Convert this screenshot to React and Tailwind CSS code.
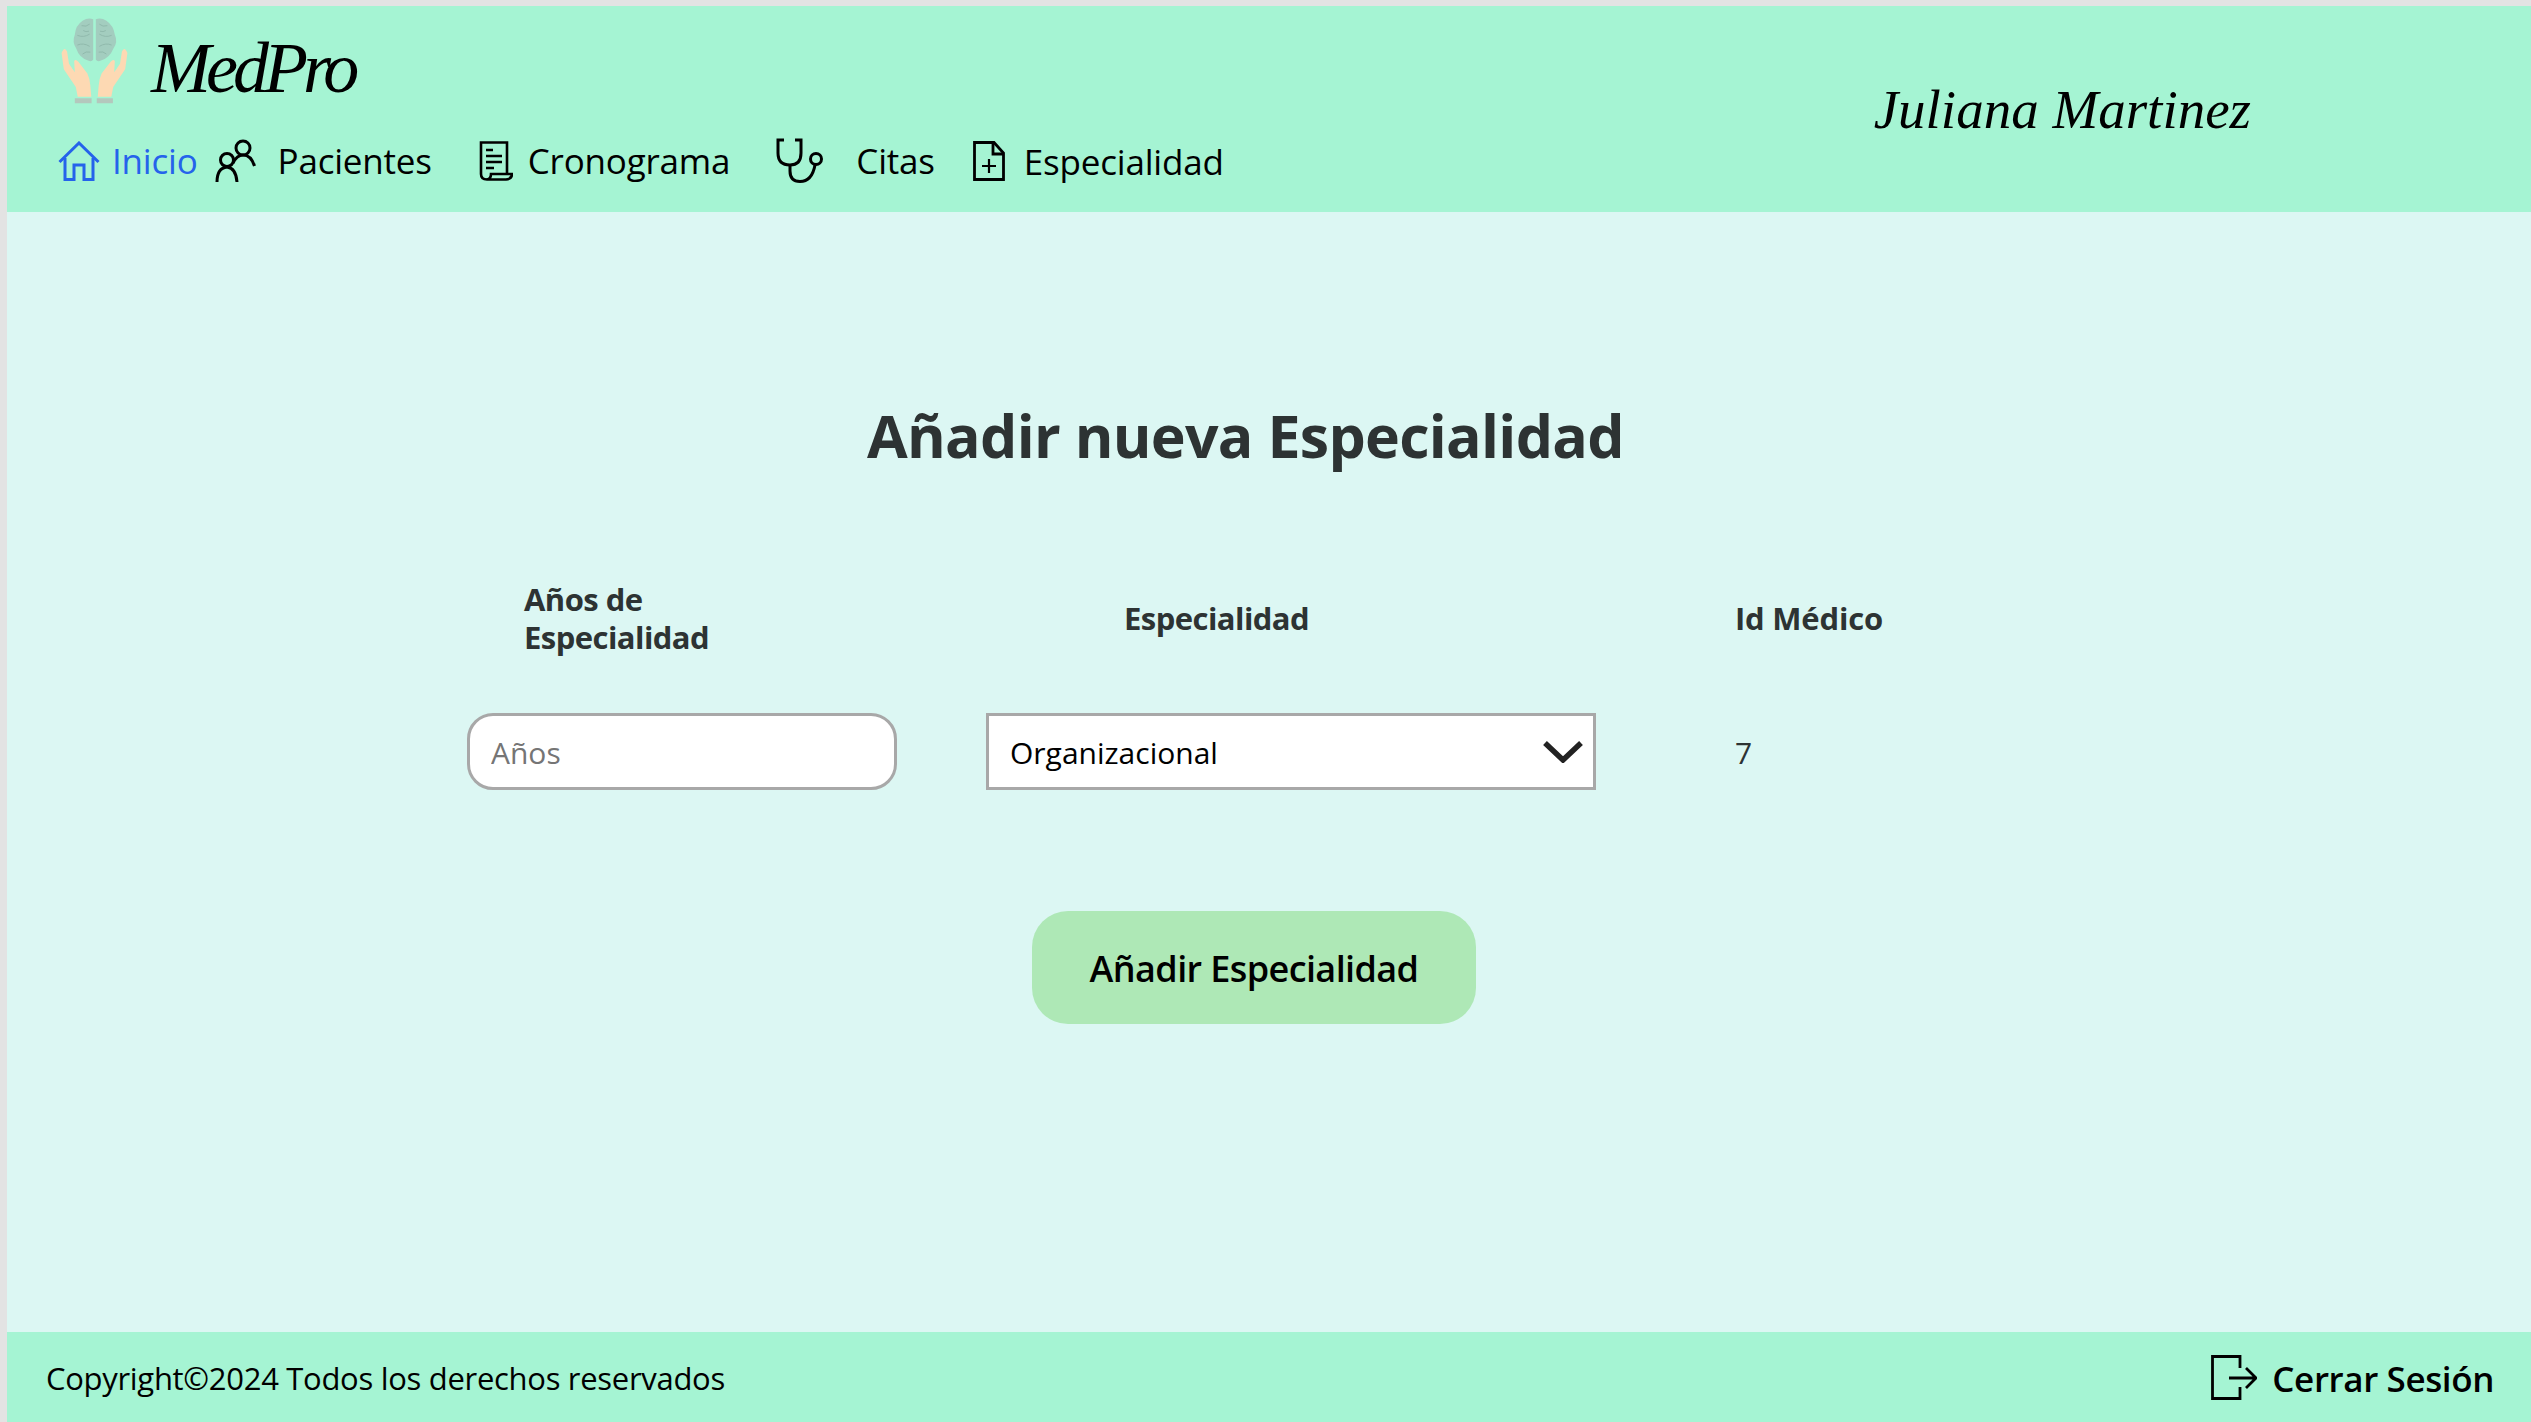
function Logo() {
  return (
    <svg viewBox="60 30 210 285" className="w-[69px] h-[92px] shrink-0">
      <g fill="#fdd9b3">
        <path d="M63 145 Q72 122 80 140 L86 178 L104 204 L102 170 Q106 162 115 172 L143 208 Q150 222 152 245 L155 280 L113 280 L107 250 L70 195 Z" />
        <path d="M267 145 Q258 122 250 140 L244 178 L226 204 L228 170 Q224 162 215 172 L187 208 Q180 222 178 245 L175 280 L217 280 L223 250 L260 195 Z" />
      </g>
      <path d="M104 285h52v15h-52zM172 285h50v15h-50z" fill="#b4c8bd" />
      <path d="M161 40 Q145 33 128 45 Q106 60 104 88 Q95 110 108 130 Q118 160 145 168 Q156 174 161 165 Z M169 40 Q185 33 202 45 Q224 60 228 88 Q238 110 224 130 Q212 160 185 168 Q174 174 169 165 Z" fill="#a3cdbf" />
      <path d="M125 60q15 5 25 -5M112 90q20 8 38 -4M112 120q18 -8 38 4M128 148q10-10 24-6M130 75q8 6 18 2M205 60q-15 5-25 -5M218 90q-20 8-38 -4M218 120q-18 -8-38 4M202 148q-10-10-24-6M200 75q-8 6-18 2" fill="none" stroke="#8fb9ab" strokeWidth="3" />
    </svg>
  );
}

const HomeIcon = () => (
  <svg viewBox="0 0 42 40" className="w-[42px] h-[40px] shrink-0" fill="none" stroke="#2563eb" strokeWidth="3">
    <path d="M1.5 21 L21 2 L40.5 21" />
    <path d="M7 17 V38.5 H16 V24 H26 V38.5 H35 V17" />
  </svg>
);

const PeopleIcon = () => (
  <svg viewBox="0 0 41 44" className="w-[41px] h-[44px] shrink-0" fill="none" stroke="#000" strokeWidth="3">
    <circle cx="28" cy="9" r="7" />
    <circle cx="12" cy="21" r="6.5" />
    <path d="M18 24 Q22 16 28 16 Q36 16 39.5 27" />
    <path d="M2 43 Q2 29 12 28 Q21 29 22 43" />
  </svg>
);

const ScrollIcon = () => (
  <svg viewBox="0 0 34 40" className="w-[34px] h-[40px] shrink-0" fill="none" stroke="#000" strokeWidth="2.6">
    <path d="M2 33 V1.5 H28 V33" />
    <path d="M2 33 Q2 38.5 8 38.5 H27 Q33 38 33 33 H12 Q12 38.5 7 38.5" />
    <path d="M7 9h7M7 15h16M7 21h16M7 27h8" />
  </svg>
);

const StethIcon = () => (
  <svg viewBox="0 0 47 45" className="w-[47px] h-[45px] shrink-0" fill="none" stroke="#000" strokeWidth="3">
    <path d="M8 2 H2 V15 Q2 27 14 27 Q25 27 25 15 V2 H19" />
    <path d="M14 27 V33 Q14 43.5 24 43.5 Q36 43.5 39 27" />
    <circle cx="40" cy="21" r="5.5" />
  </svg>
);

const FilePlusIcon = () => (
  <svg viewBox="0 0 32 40" className="w-[32px] h-[40px] shrink-0" fill="none" stroke="#000" strokeWidth="2.8">
    <path d="M1.5 1.5 H21 L30.5 12 V38.5 H1.5 Z" />
    <path d="M20 1.5 V13 H30.5" />
    <path d="M16 18 V32 M9 25 H23" strokeWidth="2.2" />
  </svg>
);

const LogoutIcon = () => (
  <svg viewBox="0 0 46 45" className="w-[46px] h-[45px] shrink-0" fill="none" stroke="#000" strokeWidth="2.8">
    <path d="M29 13 V1.5 H1.5 V43.5 H29 V32" />
    <path d="M18 23 H44 M35 13 L45 23 L35 33" />
  </svg>
);

const ui = "font-['Open_Sans','Noto_Sans',sans-serif]";
const script = "font-['Liberation_Serif',serif] italic";

export default function App() {
  return (
    <div className={`${ui} h-screen w-full bg-[#e3e3e3] pt-[6px] pl-[7px] flex flex-col overflow-hidden`}>
      <header className="h-[206px] shrink-0 bg-[#a5f4d3] flex justify-between text-black">
        <div className="pl-[53px] pt-[10px]">
          <div className="flex items-start h-[118px]">
            <Logo />
            <span className={`${script} ml-[22px] mt-[12px] text-[72px] leading-[80px] tracking-[-5px]`}>MedPro</span>
          </div>
          <nav className="flex items-center text-[35px] leading-[50px] tracking-[-0.2px]">
            <a className="flex items-center text-[#2563eb]"><span className="-ml-[2px]"><HomeIcon /></span><span className="ml-[12px]">Inicio</span></a>
            <a className="flex items-center ml-[17px]"><PeopleIcon /><span className="ml-[22px]">Pacientes</span></a>
            <a className="flex items-center ml-[47px]"><ScrollIcon /><span className="ml-[15px]">Cronograma</span></a>
            <a className="flex items-center ml-[46px]"><StethIcon /><span className="ml-[33px]">Citas</span></a>
            <a className="flex items-center ml-[38px]"><FilePlusIcon /><span className="ml-[19px] mt-[3px]">Especialidad</span></a>
          </nav>
        </div>
        <div className={`${script} pr-[280px] pt-[68px] text-[55px] leading-[72px]`}>Juliana Martinez</div>
      </header>

      <main className="flex-1 bg-[#dcf7f3] flex flex-col">
        <h1 className="mt-[183px] ml-[860px] text-[59px] leading-[80px] font-bold text-[#2d3333] tracking-[-0.7px]">Añadir nueva Especialidad</h1>
        <div className="mt-[105px] ml-[460px] grid grid-cols-[519px_749px_1fr] text-[#2d3333]">
          <div className="pl-[57px] h-[133px] text-[31px] leading-[38px] font-bold tracking-[-0.55px]">Años de<br />Especialidad</div>
          <div className="pl-[138px] h-[133px] pt-[19px] text-[31px] leading-[38px] font-bold tracking-[-0.55px]">Especialidad</div>
          <div className="h-[133px] pt-[19px] text-[31px] leading-[38px] font-bold tracking-[-0.2px]">Id Médico</div>
          <input
            placeholder="Años"
            className="w-[430px] h-[77px] bg-white border-[3px] border-[#a8a8a8] rounded-[26px] pl-[21px] pr-[21px] pt-[2px] text-[30px] outline-none placeholder:text-[#757575]"
          />
          <div className="w-[610px] h-[77px] bg-white border-[3px] border-[#a8a8a8] flex items-center justify-between pl-[21px] pr-[10px] text-[30px] text-black">
            <span className="mt-[2px]">Organizacional</span>
            <svg viewBox="0 0 40 23" className="w-[40px] h-[23px]" fill="none" stroke="#222" strokeWidth="5.5"><path d="M2 3 L20 20 L38 3" /></svg>
          </div>
          <div className="flex items-center pt-[2px] text-[30px]">7</div>
        </div>
        <button className="mt-[121px] ml-[1025px] w-[444px] h-[113px] pt-[3px] rounded-[36px] bg-[#aee8b6] text-[36px] font-semibold text-black tracking-[-0.6px]">Añadir Especialidad</button>
      </main>

      <footer className="h-[90px] shrink-0 bg-[#a5f4d3] flex items-center justify-between pl-[39px] pr-[37px] text-black">
        <span className="text-[31px] tracking-[-0.3px] mt-[2px]">Copyright©2024 Todos los derechos reservados</span>
        <span className="flex items-center text-[35px] font-semibold tracking-[-0.4px]"><LogoutIcon /><span className="ml-[15px] mt-[4px]">Cerrar Sesión</span></span>
      </footer>
    </div>
  );
}
